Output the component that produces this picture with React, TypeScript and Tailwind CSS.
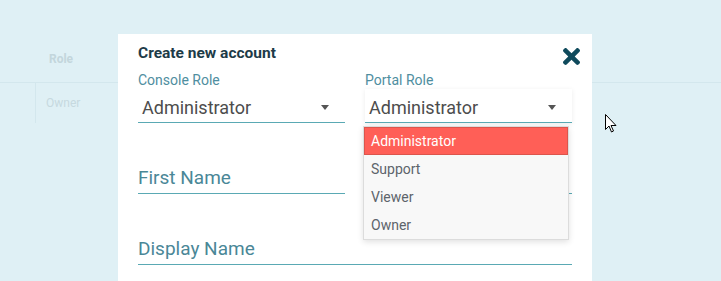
const portalRoles = ['Administrator', 'Support', 'Viewer', 'Owner'];

function Caret() {
  return (
    <svg width="8" height="5" viewBox="0 0 8 5" className="mr-[16px] shrink-0">
      <path d="M0 0h8L4 5z" fill="#555" />
    </svg>
  );
}

function RoleSelect({ label, value, raised }: { label: string; value: string; raised?: boolean }) {
  return (
    <div>
      <div className="text-[14px] leading-[17px] text-[#4f8ea0]">{label}</div>
      <div
        className={`flex h-[34px] items-center justify-between border-b border-[#5aa9b4] pl-1 pt-[4px] ${
          raised ? 'shadow-[0_1px_5px_rgba(0,0,0,0.08)]' : ''
        }`}
      >
        <span className="text-[18px] leading-5 text-[#4d4d4d]">{value}</span>
        <Caret />
      </div>
    </div>
  );
}

function TextField({ placeholder, className = '' }: { placeholder: string; className?: string }) {
  return (
    <div className={`mt-[44px] border-b border-[#5aa9b4] pb-[4px] ${className}`}>
      <span className="block h-[22px] text-[19px] leading-[22px] text-[#4a8797]">{placeholder}</span>
    </div>
  );
}

export default function App() {
  return (
    <div className="relative h-[281px] w-full overflow-hidden bg-[#dff0f5] font-[Roboto,sans-serif]">
      {/* table behind the modal */}
      <div className="pt-[35px]">
        <div className="flex h-[48px] items-center border-b border-[#d3e7ed]">
          <div className="w-[36px]" />
          <div className="w-[50px] text-center text-[12px] font-bold text-[#c3d6dc]">Role</div>
        </div>
        <div className="flex h-[40px]">
          <div className="w-[36px] border-r border-[#d3e7ed]" />
          <div className="flex items-center pl-[10px] text-[12px] text-[#c6d9df]">Owner</div>
        </div>
      </div>

      {/* modal */}
      <div className="absolute left-[118px] top-[34px] h-[260px] w-[474px] bg-white px-5 pt-[9px]">
        <h2 className="text-[15.5px] font-bold leading-5 text-[#1d3b48]">Create new account</h2>
        <button className="absolute left-[445px] top-[14px]" aria-label="close">
          <svg width="17" height="17" viewBox="0 80 352 352">
            <path
              fill="#0f4a5c"
              d="M242.72 256l100.07-100.07c12.28-12.28 12.28-32.19 0-44.48l-22.24-22.240c-12.28-12.28-32.19-12.28-44.48 0L176 189.28 75.93 89.21c-12.28-12.28-32.19-12.28-44.48 0L9.21 111.45c-12.28 12.28-12.28 32.19 0 44.48L109.28 256 9.21 356.07c-12.28 12.28-12.28 32.19 0 44.48l22.24 22.24c12.28 12.28 32.2 12.28 44.48 0L176 322.72l100.07 100.07c12.28 12.28 32.2 12.28 44.48 0l22.24-22.24c12.28-12.28 12.28-32.19 0-44.48L242.72 256z"
            />
          </svg>
        </button>

        <div className="mt-[9px] grid grid-cols-2 gap-x-5">
          <RoleSelect label="Console Role" value="Administrator" />
          <RoleSelect label="Portal Role" value="Administrator" raised />
          <TextField placeholder="First Name" />
          {/* Last Name sits under the open menu */}
          <TextField placeholder="" />
          <TextField placeholder="Display Name" className="col-span-2" />
        </div>
      </div>

      {/* open portal role menu */}
      <ul className="absolute left-[363px] top-[126px] w-[206px] border border-[#dcdcdc] bg-[#f8f8f8] shadow-[0_2px_6px_rgba(0,0,0,0.12)]">
        {portalRoles.map((role, i) => (
          <li
            key={role}
            className={
              i === 0
                ? 'flex h-[28px] items-center border border-[#dc554c] bg-[#ff5f57] pl-[6px] text-[14px] text-white'
                : 'flex h-[28px] items-center pl-[7px] text-[14px] text-[#5d646b]'
            }
          >
            {role}
          </li>
        ))}
      </ul>

      {/* mouse pointer */}
      <svg className="absolute left-[605px] top-[114px]" width="13" height="19" viewBox="0 0 13 19">
        <path d="M0.5 0.5v15l3.5-3.5 2.5 6 2-1-2.5-5.5h5z" fill="#fff" stroke="#000" strokeWidth="1" strokeLinejoin="round" />
      </svg>
    </div>
  );
}
